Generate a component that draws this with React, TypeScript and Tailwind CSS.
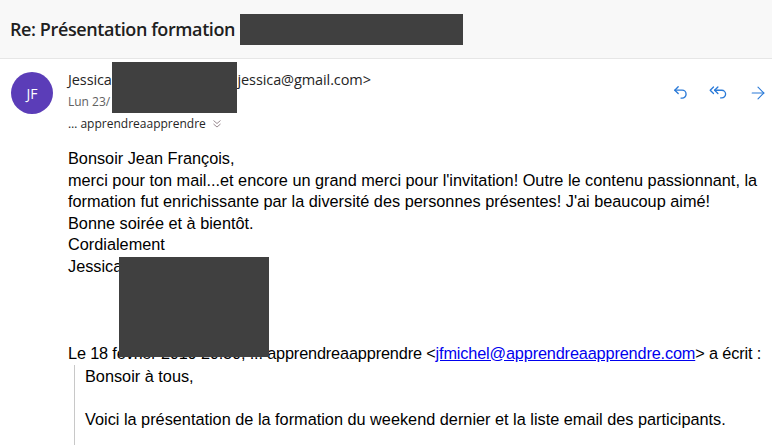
import { ArrowRight } from 'lucide-react'

/** Flèche « Répondre » façon Outlook. */
function ReplyIcon() {
  return (
    <svg width="18" height="18" viewBox="0 0 16 16" fill="none" stroke="#2a7ad8" strokeWidth="1.2" strokeLinecap="round" strokeLinejoin="round">
      <path d="M5.5 2.5 L2.5 5.5 L5.5 8.5" />
      <path d="M2.5 5.5 H9 a3.5 3.5 0 0 1 0 7 H8" />
    </svg>
  )
}

function ReplyAllIcon() {
  return (
    <svg width="22" height="18" viewBox="0 0 20 16" fill="none" stroke="#2a7ad8" strokeWidth="1.2" strokeLinecap="round" strokeLinejoin="round">
      <path d="M5 2.5 L2 5.5 L5 8.5" />
      <path d="M9 2.5 L6 5.5 L9 8.5" />
      <path d="M6 5.5 H12.5 a3.5 3.5 0 0 1 0 7 H11.5" />
    </svg>
  )
}

const Redact = ({ className }: { className: string }) => (
  <div className={`absolute bg-[#404040] ${className}`} />
)

export default function App() {
  const ui = { fontFamily: '"Open Sans", "Noto Sans", sans-serif' }
  const body = { fontFamily: '"Liberation Sans", Arial, sans-serif' }

  return (
    <div className="relative w-[772px] h-[445px] overflow-hidden bg-white" style={ui}>
      {/* Sujet */}
      <div className="h-[59px] bg-[#f8f8f8] border-b border-[#e6e6e6] flex items-center pl-[10px]">
        <h1 className="text-[18px] font-semibold text-[#202020] tracking-[-0.4px]">Re: Présentation formation</h1>
        <div className="ml-[5px] w-[223px] h-[31px] bg-[#404040]" />
      </div>

      {/* En-tête du message */}
      <div className="flex pt-[13px] pl-[11px] pr-[4px]">
        <div className="w-[42px] h-[42px] rounded-full bg-[#5b3db8] flex items-center justify-center text-white text-[14px]">
          JF
        </div>
        <div className="ml-[15px] flex-1">
          <div className="text-[14.5px] leading-[20px] text-[#252525] mt-[-2px] tracking-[-0.1px]">
            Jessica <span className="inline-block w-[122px]" />jessica@gmail.com&gt;
          </div>
          <div className="text-[12px] leading-[18px] text-[#616161] mt-[3px]">Lun 23/</div>
          <div className="text-[12px] leading-[18px] text-[#252525] mt-[4px] flex items-center gap-[6px]">
            … apprendreaapprendre
            <svg width="10" height="10" viewBox="0 0 10 10" fill="none" stroke="#9a8a90" strokeWidth="1">
              <path d="M1.5 1.5 L5 4.5 L8.5 1.5" />
              <path d="M1.5 5 L5 8 L8.5 5" />
            </svg>
          </div>
        </div>
        <div className="flex items-start gap-[18px] pt-[12px]">
          <ReplyIcon />
          <ReplyAllIcon />
          <ArrowRight size={20} strokeWidth={1.3} color="#2a7ad8" className="-mt-[1px]" />
        </div>
      </div>

      {/* Corps */}
      <div className="pl-[68px] pt-[15px] text-[16.3px] leading-[21.6px] text-black" style={body}>
        <p>Bonsoir Jean François,</p>
        <p className="whitespace-nowrap">merci pour ton mail...et encore un grand merci pour l'invitation! Outre le contenu passionnant, la</p>
        <p>formation fut enrichissante par la diversité des personnes présentes! J'ai beaucoup aimé!</p>
        <p>Bonne soirée et à bientôt.</p>
        <p>Cordialement</p>
        <p>Jessica</p>
        <p className="mt-[65px] whitespace-nowrap tracking-[-0.15px]">
          Le 18 février 2019 20:30, ... apprendreaapprendre &lt;
          <span className="text-[#0000ee] underline">jfmichel@apprendreaapprendre.com</span>&gt; a écrit :
        </p>
        <div className="ml-[6px] mt-[1px] border-l border-[#c8c8c8] pl-[10px] pt-[1px] pb-[20px]">
          <p>Bonsoir à tous,</p>
          <p>&nbsp;</p>
          <p>Voici la présentation de la formation du weekend dernier et la liste email des participants.</p>
        </div>
      </div>

      <Redact className="left-[112px] top-[62px] w-[125px] h-[51px]" />
      <Redact className="left-[119px] top-[257px] w-[150px] h-[100px]" />
    </div>
  )
}
